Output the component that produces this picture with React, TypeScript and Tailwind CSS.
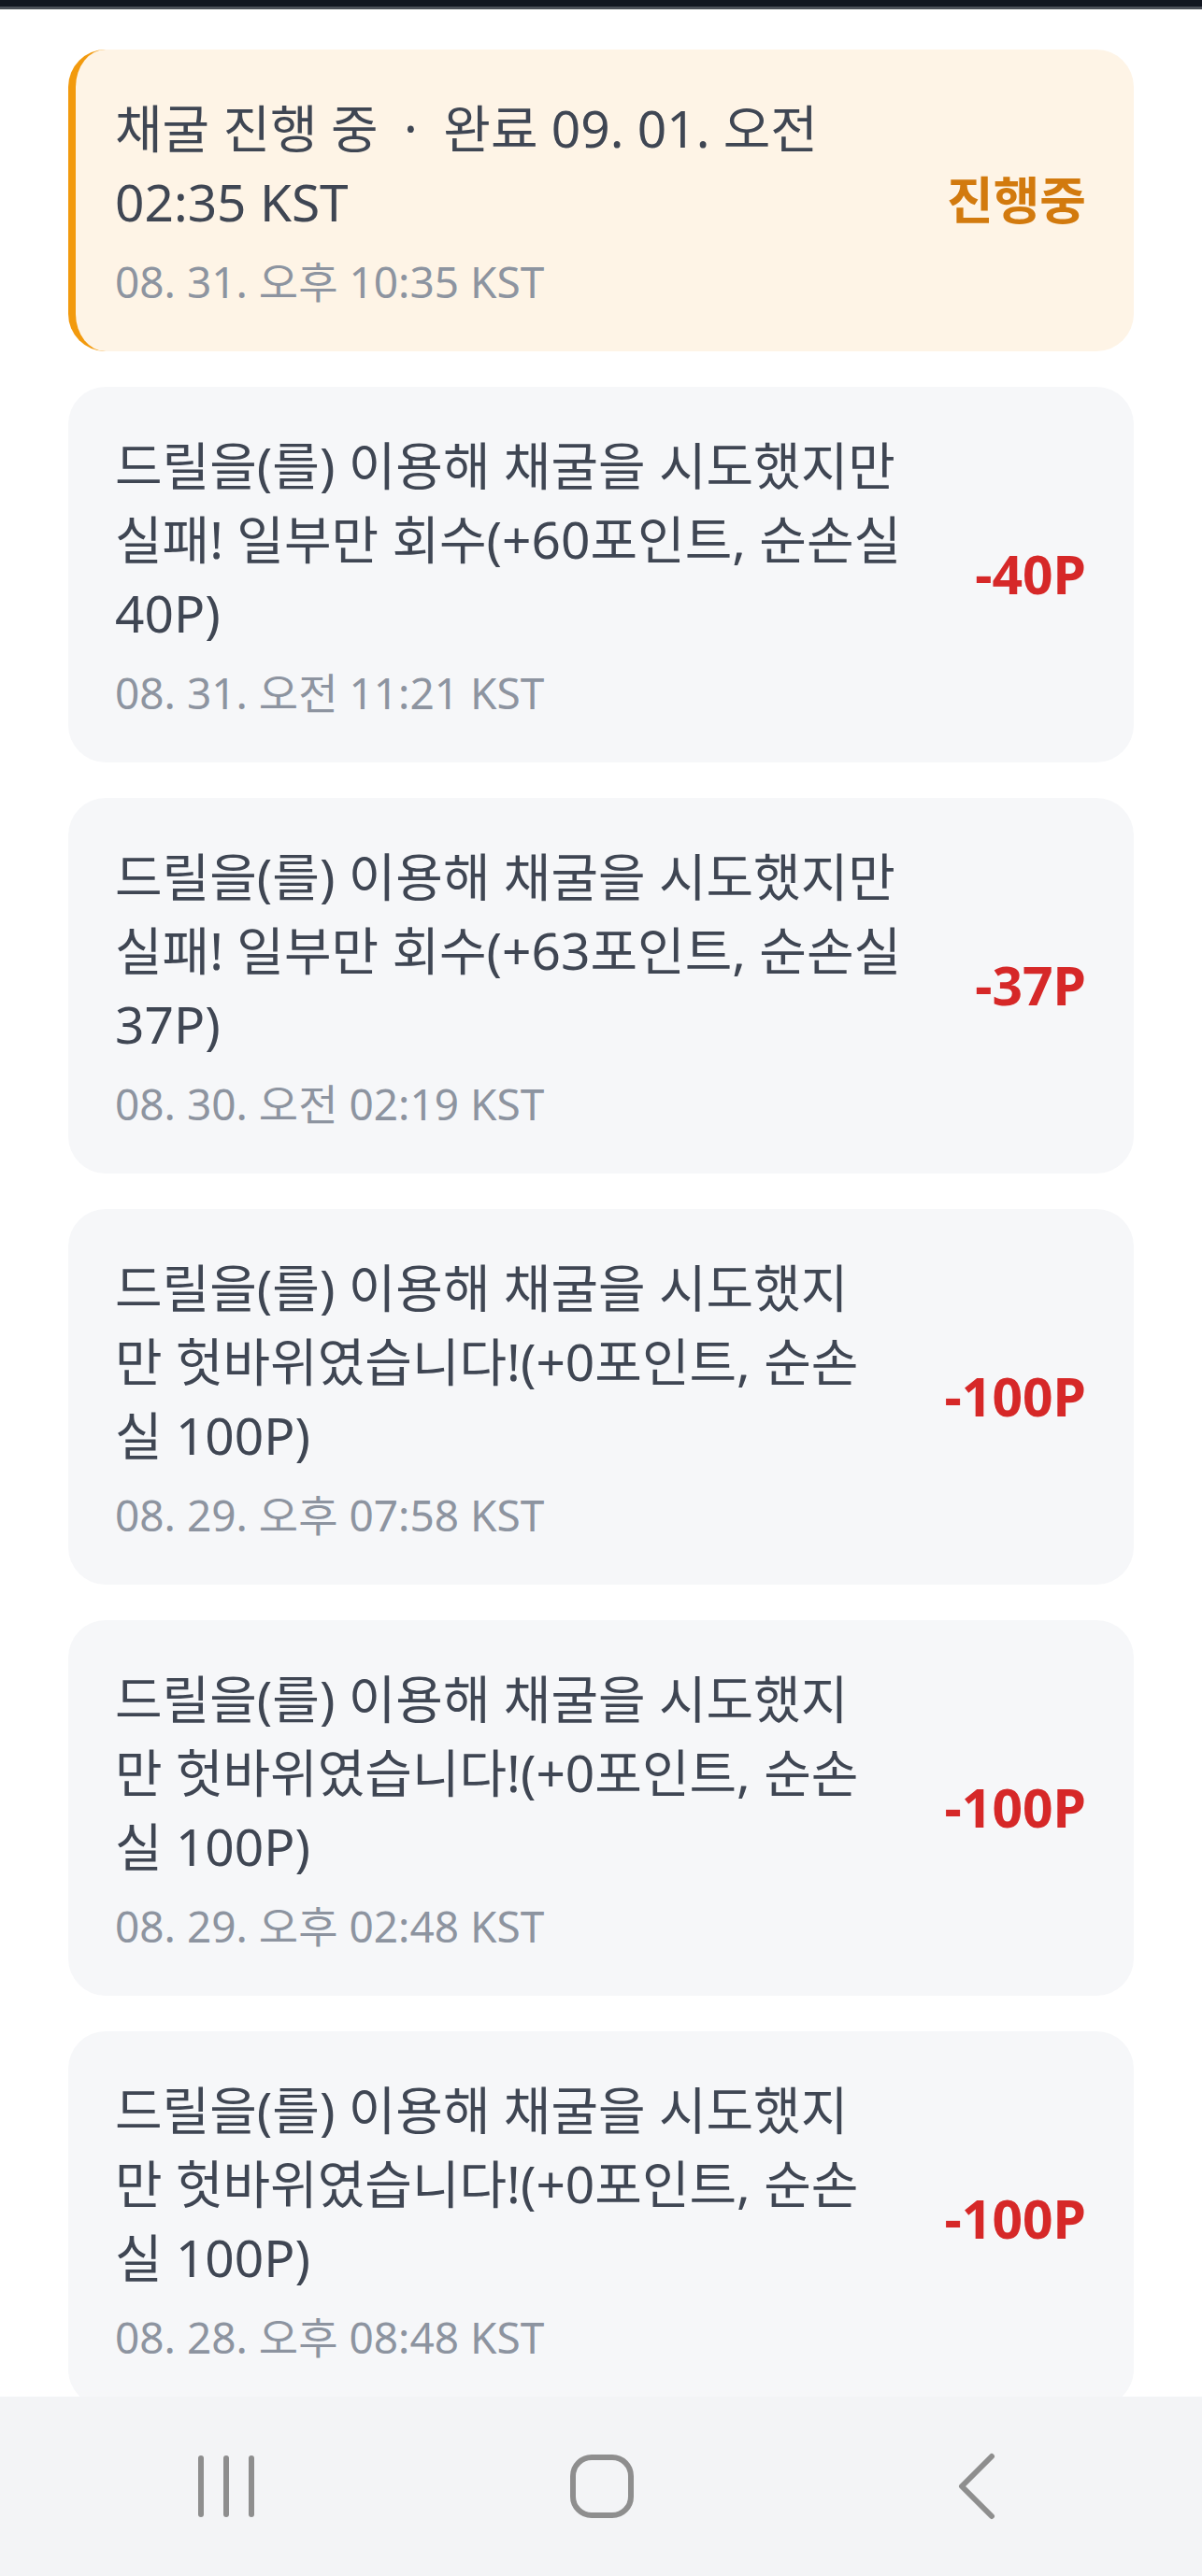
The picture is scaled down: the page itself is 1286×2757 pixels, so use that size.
import React from 'react';

const items = [
  { text: '드릴을(를) 이용해 채굴을 시도했지만 실패! 일부만 회수(+60포인트, 순손실 40P)', date: '08. 31. 오전 11:21 KST', amount: '-40P' },
  { text: '드릴을(를) 이용해 채굴을 시도했지만 실패! 일부만 회수(+63포인트, 순손실 37P)', date: '08. 30. 오전 02:19 KST', amount: '-37P' },
  { text: '드릴을(를) 이용해 채굴을 시도했지만 헛바위였습니다!(+0포인트, 순손실 100P)', date: '08. 29. 오후 07:58 KST', amount: '-100P' },
  { text: '드릴을(를) 이용해 채굴을 시도했지만 헛바위였습니다!(+0포인트, 순손실 100P)', date: '08. 29. 오후 02:48 KST', amount: '-100P' },
  { text: '드릴을(를) 이용해 채굴을 시도했지만 헛바위였습니다!(+0포인트, 순손실 100P)', date: '08. 28. 오후 08:48 KST', amount: '-100P' },
];

function HistoryCard({ text, date, amount }: any) {
  return (
    <div className="shrink-0 rounded-[40px] bg-[#f6f7f9] py-[44px] pl-[50px] pr-[51px] flex items-center justify-between gap-[64px]">
      <div className="flex-1 min-w-0">
        <p className="text-[55px] leading-[79px] text-[#3f4653]">{text}</p>
        <p className="mt-[15px] text-[46px] leading-[62px] text-[#8d94a0]">{date}</p>
      </div>
      <span className="shrink-0 text-[57px] font-bold text-[#d62828]">{amount}</span>
    </div>
  );
}

export default function App() {
  return (
    <div
      className="h-[2757px] bg-white flex flex-col overflow-hidden"
      style={{ fontFamily: '"Noto Sans", "Noto Sans CJK KR", sans-serif' }}
    >
      {/* 상단 상태바 잔상 */}
      <div className="h-[7px] bg-[#111620]" />
      <div className="h-[3px] bg-[#4b5058]" />

      <div className="flex-1 min-h-0 overflow-hidden px-[73px] pt-[43px] flex flex-col gap-[38px]">
        {/* 진행 중인 채굴 */}
        <div className="shrink-0 rounded-[40px] bg-[#fef4e6] border-l-[8px] border-[#f29a0e] py-[44px] pl-[42px] pr-[51px] flex items-center justify-between gap-[64px]">
          <div className="flex-1 min-w-0">
            <p className="text-[55px] leading-[79px] text-[#3f4653]">
              {'채굴 진행 중\u2002·\u2002완료 09. 01. 오전 02:35 KST'}
            </p>
            <p className="mt-[15px] text-[46px] leading-[62px] text-[#8d94a0]">08. 31. 오후 10:35 KST</p>
          </div>
          <span className="shrink-0 text-[54px] font-bold text-[#d27a0e]">진행중</span>
        </div>

        {items.map((it, i) => (
          <HistoryCard key={i} {...it} />
        ))}
      </div>

      {/* 하단 내비게이션 바 */}
      <div className="h-[192px] shrink-0 bg-[#f3f4f6] flex items-center pl-[209px]">
        <svg width="66" height="68" viewBox="0 0 66 68">
          <g stroke="#8e8e8e" strokeWidth="6" strokeLinecap="round">
            <line x1="6" y1="4" x2="6" y2="64" />
            <line x1="33" y1="4" x2="33" y2="64" />
            <line x1="60" y1="4" x2="60" y2="64" />
          </g>
        </svg>
        <svg width="68" height="68" viewBox="0 0 68 68" className="ml-[335px]">
          <rect x="3" y="3" width="62" height="62" rx="20" fill="none" stroke="#8e8e8e" strokeWidth="6" />
        </svg>
        <svg width="44" height="72" viewBox="0 0 44 72" className="ml-[345px]">
          <polyline points="38,4 6,36 38,68" fill="none" stroke="#8e8e8e" strokeWidth="6" strokeLinecap="round" strokeLinejoin="round" />
        </svg>
      </div>
    </div>
  );
}
